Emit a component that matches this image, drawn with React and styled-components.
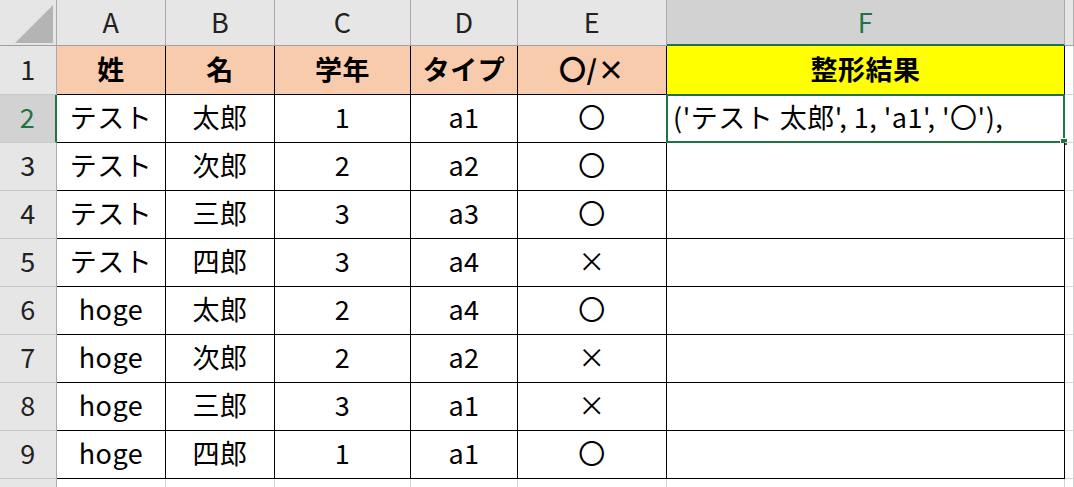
import React from "react";
import styled, { createGlobalStyle } from "styled-components";

const Global = createGlobalStyle`
  html, body { margin: 0; padding: 0; background: #fff; }
  body { font-family: "Noto Sans CJK JP", "Noto Sans", sans-serif; }
`;

const GREEN = "#217346";

const Sheet = styled.div`
  width: 1074px;
  height: 487px;
  overflow: hidden;
  display: grid;
  grid-template-columns: 57px 109px 109px 136px 107px 149px 398px 1fr;
  grid-template-rows: 46px 49px repeat(8, 48px) 40px;
  background: #fff;
`;

const Base = styled.div`
  box-sizing: border-box;
  display: flex;
  align-items: center;
  justify-content: center;
  font-size: 27px;
  letter-spacing: 0.5px;
  color: #000;
  white-space: nowrap;
  position: relative;
  padding-bottom: 4px;
`;

const Corner = styled(Base)`
  background: #e6e6e6;
  border-right: 1px solid #ababab;
  border-bottom: 1px solid #9f9f9f;
  align-items: flex-start;
  justify-content: flex-start;
  padding: 5px 0 0 15px;
`;

const ColHead = styled(Base)`
  background: ${(p) => (p.$active ? "#d2d2d2" : "#e6e6e6")};
  color: ${(p) => (p.$active ? GREEN : "#222")};
  border-right: 1px solid #ababab;
  border-bottom: ${(p) => (p.$active ? `2px solid ${GREEN}` : "1px solid #9f9f9f")};
  padding-bottom: ${(p) => (p.$active ? "1px" : "2px")};
`;

const RowHead = styled(Base)`
  background: ${(p) => (p.$active ? "#d2d2d2" : "#e6e6e6")};
  color: ${(p) => (p.$active ? GREEN : "#222")};
  border-right: ${(p) => (p.$active ? `2px solid ${GREEN}` : "1px solid #ababab")};
  border-bottom: 1px solid #c8c8c8;
`;

const Cell = styled(Base)`
  border-right: 1px solid #000;
  border-bottom: 1px solid #000;
  background: ${(p) => p.$fill || "#fff"};
  font-weight: ${(p) => (p.$bold ? 700 : 400)};
  justify-content: ${(p) => (p.$left ? "flex-start" : "center")};
  padding-left: ${(p) => (p.$left ? "6px" : "0")};
`;

const Blank = styled(Base)`
  border-right: 1px solid #d4d4d4;
  border-bottom: 1px solid #d4d4d4;
`;

const Selection = styled.div`
  position: absolute;
  left: -1px;
  top: -1px;
  right: -1px;
  bottom: -1px;
  border: 2px solid ${GREEN};
  pointer-events: none;
`;

const Handle = styled.div`
  position: absolute;
  right: -5px;
  bottom: -5px;
  width: 6px;
  height: 6px;
  background: ${GREEN};
  border: 1px solid #fff;
`;

const Triangle = () => (
  <svg width="38" height="38" viewBox="0 0 38 38">
    <polygon points="38,0 38,38 0,38" fill="#b4b4b4" />
  </svg>
);

const cols = ["A", "B", "C", "D", "E", "F"];
const header = ["姓", "名", "学年", "タイプ", "〇/×"];
const rows = [
  ["テスト", "太郎", "1", "a1", "〇"],
  ["テスト", "次郎", "2", "a2", "〇"],
  ["テスト", "三郎", "3", "a3", "〇"],
  ["テスト", "四郎", "3", "a4", "×"],
  ["hoge", "太郎", "2", "a4", "〇"],
  ["hoge", "次郎", "2", "a2", "×"],
  ["hoge", "三郎", "3", "a1", "×"],
  ["hoge", "四郎", "1", "a1", "〇"],
];

export default function App() {
  return (
    <>
      <Global />
      <Sheet>
        <Corner>
          <Triangle />
        </Corner>
        {cols.map((c) => (
          <ColHead key={c} $active={c === "F"}>
            {c}
          </ColHead>
        ))}
        <ColHead />

        <RowHead>1</RowHead>
        {header.map((h) => (
          <Cell key={h} $fill="#f8cbad" $bold>
            {h}
          </Cell>
        ))}
        <Cell $fill="#ffff00" $bold>
          整形結果
        </Cell>
        <Blank />

        {rows.map((r, i) => (
          <React.Fragment key={i}>
            <RowHead $active={i === 0}>{i + 2}</RowHead>
            {r.map((v, j) => (
              <Cell key={j}>{v}</Cell>
            ))}
            {i === 0 ? (
              <Cell $left>
                ('テスト 太郎', 1, 'a1', '〇'),
                <Selection>
                  <Handle />
                </Selection>
              </Cell>
            ) : (
              <Cell />
            )}
            <Blank />
          </React.Fragment>
        ))}

        <RowHead />
        {cols.map((c) => (
          <Blank key={c} />
        ))}
        <Blank />
      </Sheet>
    </>
  );
}
